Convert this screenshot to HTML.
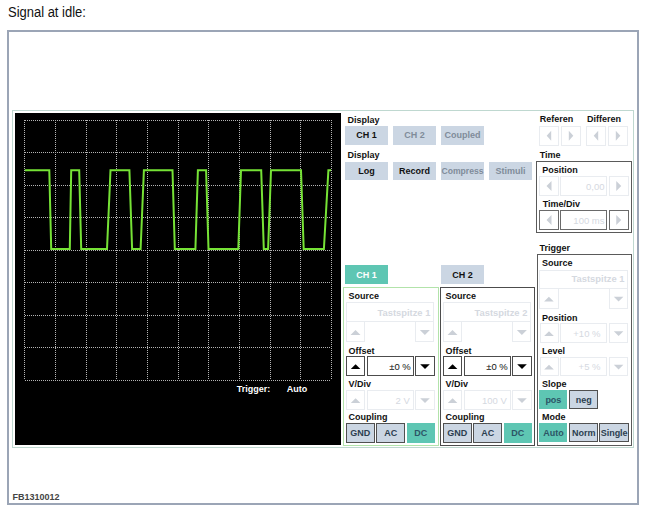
<!DOCTYPE html><html><head><meta charset="utf-8"><style>
html,body{margin:0;padding:0;background:#fff;width:648px;height:511px;overflow:hidden}
body{position:relative;font-family:"Liberation Sans",sans-serif}
.a{position:absolute;box-sizing:border-box}
.t{white-space:nowrap}
</style></head><body>
<div class="a t" style="top:2.82px;font-size:13.8px;font-weight:normal;color:#111;line-height:20px;left:7.7px;transform:scaleX(0.94);transform-origin:0 0;">Signal at idle:</div>
<div class="a" style="left:7px;top:30px;width:632px;height:475px;border:2px solid #9BA5B6;"></div>
<div class="a t" style="top:486.88px;font-size:9px;font-weight:bold;color:#444;line-height:20px;left:12.5px;">FB1310012</div>
<div class="a" style="left:12px;top:110px;width:622px;height:338px;border:1px solid #BFD8D0;"></div>
<div class="a" style="left:15px;top:113px;width:326px;height:332px;background:#000;"></div>
<svg class="a" style="left:0;top:0" width="648" height="511"><g stroke="#B4B4B4" stroke-width="1" stroke-dasharray="1 1" shape-rendering="crispEdges"><line x1="24.8" y1="120" x2="24.8" y2="380"/><line x1="55.5" y1="120" x2="55.5" y2="380"/><line x1="86.1" y1="120" x2="86.1" y2="380"/><line x1="116.8" y1="120" x2="116.8" y2="380"/><line x1="147.4" y1="120" x2="147.4" y2="380"/><line x1="178.1" y1="120" x2="178.1" y2="380"/><line x1="208.7" y1="120" x2="208.7" y2="380"/><line x1="239.4" y1="120" x2="239.4" y2="380"/><line x1="270.0" y1="120" x2="270.0" y2="380"/><line x1="300.7" y1="120" x2="300.7" y2="380"/><line x1="331.3" y1="120" x2="331.3" y2="380"/><line x1="24.8" y1="120.0" x2="331.3" y2="120.0"/><line x1="24.8" y1="152.5" x2="331.3" y2="152.5"/><line x1="24.8" y1="185.0" x2="331.3" y2="185.0"/><line x1="24.8" y1="217.5" x2="331.3" y2="217.5"/><line x1="24.8" y1="250.0" x2="331.3" y2="250.0"/><line x1="24.8" y1="282.5" x2="331.3" y2="282.5"/><line x1="24.8" y1="315.0" x2="331.3" y2="315.0"/><line x1="24.8" y1="347.5" x2="331.3" y2="347.5"/><line x1="24.8" y1="380.0" x2="331.3" y2="380.0"/></g>
<polyline fill="none" stroke="#76E236" stroke-width="2" stroke-linejoin="miter" points="24.8,170.2 49.3,170.2 51.2,249 69.8,249 71.2,170.2 79.2,170.2 81.2,249 107,249 110.5,170.2 129.4,170.2 132.1,249 140.6,249 143.9,170.2 172.5,170.2 174.8,249 195.4,249 197.9,170.2 206.1,170.2 208.5,249 238.3,249 241,170.2 261.2,170.2 263.8,249 268.1,249 271,170.2 301,170.2 303.7,249 323.9,249 328.4,170.2 331,170.2"/></svg>
<div class="a t" style="top:379.08px;font-size:9px;font-weight:bold;color:#FFF;line-height:20px;left:236.7px;">Trigger:</div>
<div class="a t" style="top:379.08px;font-size:9px;font-weight:bold;color:#FFF;line-height:20px;left:286.7px;">Auto</div>
<div class="a t" style="top:109.98px;font-size:9px;font-weight:bold;color:#111;line-height:20px;left:347.4px;">Display</div>
<div class="a" style="left:345px;top:126px;width:43px;height:18.5px;background:#CBD6E3;"></div>
<div class="a t" style="top:125.41px;font-size:9px;font-weight:bold;color:#111;line-height:20px;left:266.5px;width:200px;text-align:center;">CH 1</div>
<div class="a" style="left:393px;top:126px;width:43px;height:18.5px;background:#CBD6E3;"></div>
<div class="a t" style="top:125.41px;font-size:9px;font-weight:bold;color:#808C9A;line-height:20px;left:314.5px;width:200px;text-align:center;">CH 2</div>
<div class="a" style="left:441px;top:126px;width:43px;height:18.5px;background:#CBD6E3;"></div>
<div class="a t" style="top:125.41px;font-size:9px;font-weight:bold;color:#808C9A;line-height:20px;left:362.5px;width:200px;text-align:center;">Coupled</div>
<div class="a t" style="top:145.08px;font-size:9px;font-weight:bold;color:#111;line-height:20px;left:347.4px;">Display</div>
<div class="a" style="left:345px;top:161.5px;width:43px;height:18.69999999999999px;background:#CBD6E3;"></div>
<div class="a t" style="top:161.01px;font-size:9px;font-weight:bold;color:#111;line-height:20px;left:266.5px;width:200px;text-align:center;">Log</div>
<div class="a" style="left:393px;top:161.5px;width:43px;height:18.69999999999999px;background:#CBD6E3;"></div>
<div class="a t" style="top:161.01px;font-size:9px;font-weight:bold;color:#111;line-height:20px;left:314.5px;width:200px;text-align:center;">Record</div>
<div class="a" style="left:441px;top:161.5px;width:43px;height:18.69999999999999px;background:#CBD6E3;"></div>
<div class="a t" style="top:161.00px;font-size:8.6px;font-weight:bold;color:#808C9A;line-height:20px;left:362.5px;width:200px;text-align:center;">Compress</div>
<div class="a" style="left:489px;top:161.5px;width:43px;height:18.69999999999999px;background:#CBD6E3;"></div>
<div class="a t" style="top:161.01px;font-size:9px;font-weight:bold;color:#808C9A;line-height:20px;left:410.5px;width:200px;text-align:center;">Stimuli</div>
<div class="a t" style="top:109.28px;font-size:9px;font-weight:bold;color:#111;line-height:20px;left:539.7px;">Referen</div>
<div class="a t" style="top:109.28px;font-size:9px;font-weight:bold;color:#111;line-height:20px;left:586.9px;">Differen</div>
<div class="a" style="left:539px;top:126px;width:20px;height:19.5px;border:1px solid #E9ECF0;"></div>
<div class="a" style="left:561px;top:126px;width:20px;height:19.5px;border:1px solid #E9ECF0;"></div>
<div class="a" style="left:586px;top:126px;width:20px;height:19.5px;border:1px solid #E9ECF0;"></div>
<div class="a" style="left:608px;top:126px;width:20px;height:19.5px;border:1px solid #E9ECF0;"></div>
<div class="a t" style="top:145.28px;font-size:9px;font-weight:bold;color:#111;line-height:20px;left:539.7px;">Time</div>
<div class="a" style="left:536px;top:161px;width:96px;height:71.5px;border:1px solid #5A5A5A;"></div>
<div class="a t" style="top:160.28px;font-size:9px;font-weight:bold;color:#111;line-height:20px;left:542.2px;">Position</div>
<div class="a" style="left:539px;top:176px;width:20px;height:20px;border:1px solid #E9ECF0;"></div>
<div class="a" style="left:560px;top:176px;width:46.5px;height:20px;border:1px solid #E9ECF0;"></div>
<div class="a" style="left:609px;top:176px;width:19.5px;height:20px;border:1px solid #E9ECF0;"></div>
<div class="a t" style="top:176.67px;font-size:9.5px;font-weight:normal;color:#D5D9DF;line-height:20px;right:43.5px;text-align:right;">0,00</div>
<div class="a t" style="top:193.58px;font-size:9px;font-weight:bold;color:#111;line-height:20px;left:542.7px;">Time/Div</div>
<div class="a" style="left:539px;top:210px;width:20px;height:20px;border:1px solid #6A6A6A;"></div>
<div class="a" style="left:560px;top:210px;width:46.5px;height:20px;border:1px solid #6A6A6A;"></div>
<div class="a" style="left:609px;top:210px;width:19.5px;height:20px;border:1px solid #6A6A6A;"></div>
<div class="a t" style="top:210.67px;font-size:9.5px;font-weight:normal;color:#D5D9DF;line-height:20px;right:43.5px;text-align:right;">100 ms</div>
<div class="a t" style="top:237.88px;font-size:9px;font-weight:bold;color:#111;line-height:20px;left:539.4px;">Trigger</div>
<div class="a" style="left:536.5px;top:254px;width:95.5px;height:191.8px;border:1px solid #5A5A5A;"></div>
<div class="a t" style="top:252.88px;font-size:9px;font-weight:bold;color:#111;line-height:20px;left:542px;">Source</div>
<div class="a" style="left:539px;top:270px;width:89px;height:18.5px;border:1px solid #E9ECF0;"></div>
<div class="a t" style="top:269.24px;font-size:9.4px;font-weight:bold;color:#D5D9DF;line-height:20px;right:23.5px;text-align:right;">Tastspitze 1</div>
<div class="a" style="left:539px;top:288px;width:20px;height:21px;border:1px solid #E9ECF0;"></div>
<div class="a" style="left:609.3px;top:288px;width:18.700000000000045px;height:21px;border:1px solid #E9ECF0;"></div>
<div class="a t" style="top:307.58px;font-size:9px;font-weight:bold;color:#111;line-height:20px;left:542px;">Position</div>
<div class="a" style="left:539.5px;top:323px;width:19.0px;height:20px;border:1px solid #E9ECF0;"></div>
<div class="a" style="left:560.3px;top:323px;width:46.30000000000007px;height:20px;border:1px solid #E9ECF0;"></div>
<div class="a" style="left:609px;top:323px;width:19.200000000000045px;height:20px;border:1px solid #E9ECF0;"></div>
<div class="a t" style="top:323.67px;font-size:9.5px;font-weight:normal;color:#D5D9DF;line-height:20px;right:47.5px;text-align:right;">+10 %</div>
<div class="a t" style="top:340.88px;font-size:9px;font-weight:bold;color:#111;line-height:20px;left:542px;">Level</div>
<div class="a" style="left:539.5px;top:356.7px;width:19.0px;height:19.600000000000023px;border:1px solid #E9ECF0;"></div>
<div class="a" style="left:560.3px;top:356.7px;width:46.30000000000007px;height:19.600000000000023px;border:1px solid #E9ECF0;"></div>
<div class="a" style="left:609px;top:356.7px;width:19.200000000000045px;height:19.600000000000023px;border:1px solid #E9ECF0;"></div>
<div class="a t" style="top:357.17px;font-size:9.5px;font-weight:normal;color:#D5D9DF;line-height:20px;right:47.5px;text-align:right;">+5 %</div>
<div class="a t" style="top:373.78px;font-size:9px;font-weight:bold;color:#111;line-height:20px;left:542px;">Slope</div>
<div class="a" style="left:539.3px;top:390px;width:28.200000000000045px;height:19px;background:#5EC6B3;"></div>
<div class="a t" style="top:389.66px;font-size:9px;font-weight:bold;color:#2C5566;line-height:20px;left:453.4px;width:200px;text-align:center;">pos</div>
<div class="a" style="left:569.4px;top:390px;width:28.600000000000023px;height:19px;border:1px solid #505050;background:#CBD6E3;"></div>
<div class="a t" style="top:389.66px;font-size:9px;font-weight:bold;color:#2C3E50;line-height:20px;left:483.70000000000005px;width:200px;text-align:center;">neg</div>
<div class="a t" style="top:407.08px;font-size:9px;font-weight:bold;color:#111;line-height:20px;left:542px;">Mode</div>
<div class="a" style="left:539.3px;top:423.3px;width:28.200000000000045px;height:18.899999999999977px;background:#5EC6B3;"></div>
<div class="a t" style="top:422.91px;font-size:9px;font-weight:bold;color:#2C5566;line-height:20px;left:453.4px;width:200px;text-align:center;">Auto</div>
<div class="a" style="left:569.4px;top:423.3px;width:28.600000000000023px;height:18.899999999999977px;border:1px solid #505050;background:#CBD6E3;"></div>
<div class="a t" style="top:422.91px;font-size:9px;font-weight:bold;color:#2C3E50;line-height:20px;left:483.70000000000005px;width:200px;text-align:center;">Norm</div>
<div class="a" style="left:599.3px;top:423.3px;width:29.700000000000045px;height:18.899999999999977px;border:1px solid #505050;background:#CBD6E3;"></div>
<div class="a t" style="top:422.91px;font-size:9px;font-weight:bold;color:#2C3E50;line-height:20px;left:514.15px;width:200px;text-align:center;">Single</div>
<div class="a" style="left:345px;top:265px;width:43px;height:19px;background:#5EC6B3;"></div>
<div class="a t" style="top:264.66px;font-size:9px;font-weight:bold;color:#FFFFFF;line-height:20px;left:266.5px;width:200px;text-align:center;">CH 1</div>
<div class="a" style="left:441px;top:265px;width:43px;height:19px;background:#CBD6E3;"></div>
<div class="a t" style="top:264.66px;font-size:9px;font-weight:bold;color:#111;line-height:20px;left:362.5px;width:200px;text-align:center;">CH 2</div>
<div class="a" style="left:343px;top:287px;width:96px;height:159px;border:1px solid #B2E3AA;"></div>
<div class="a t" style="top:285.88px;font-size:9px;font-weight:bold;color:#111;line-height:20px;left:348.5px;">Source</div>
<div class="a" style="left:345.8px;top:302px;width:88.69999999999999px;height:19.80000000000001px;border:1px solid #E9ECF0;"></div>
<div class="a t" style="top:302.74px;font-size:9.4px;font-weight:bold;color:#D5D9DF;line-height:20px;right:217.60000000000002px;text-align:right;">Tastspitze 1</div>
<div class="a" style="left:345.8px;top:321.4px;width:19.5px;height:20.900000000000034px;border:1px solid #E9ECF0;"></div>
<div class="a" style="left:415.3px;top:321.4px;width:19.19999999999999px;height:20.900000000000034px;border:1px solid #E9ECF0;"></div>
<div class="a t" style="top:340.68px;font-size:9px;font-weight:bold;color:#111;line-height:20px;left:348.5px;">Offset</div>
<div class="a" style="left:345.8px;top:356px;width:19.600000000000023px;height:20px;border:1px solid #4C4C4C;"></div>
<div class="a" style="left:367.0px;top:356px;width:46.700000000000045px;height:20px;border:1px solid #4C4C4C;"></div>
<div class="a" style="left:415.4px;top:356px;width:19.200000000000045px;height:20px;border:1px solid #4C4C4C;"></div>
<div class="a t" style="top:356.67px;font-size:9.5px;font-weight:normal;color:#111;line-height:20px;right:237.2px;text-align:right;">&plusmn;0 %</div>
<div class="a t" style="top:373.58px;font-size:9px;font-weight:bold;color:#111;line-height:20px;left:348.5px;">V/Div</div>
<div class="a" style="left:345.8px;top:390.2px;width:19.600000000000023px;height:19.600000000000023px;border:1px solid #E9ECF0;"></div>
<div class="a" style="left:367.0px;top:390.2px;width:46.700000000000045px;height:19.600000000000023px;border:1px solid #E9ECF0;"></div>
<div class="a" style="left:415.4px;top:390.2px;width:19.200000000000045px;height:19.600000000000023px;border:1px solid #E9ECF0;"></div>
<div class="a t" style="top:390.67px;font-size:9.5px;font-weight:normal;color:#D5D9DF;line-height:20px;right:238.2px;text-align:right;">2 V</div>
<div class="a t" style="top:406.88px;font-size:9px;font-weight:bold;color:#111;line-height:20px;left:348.5px;">Coupling</div>
<div class="a" style="left:345.8px;top:423px;width:29.0px;height:19.5px;border:1px solid #505050;background:#CBD6E3;"></div>
<div class="a t" style="top:422.91px;font-size:9px;font-weight:bold;color:#2C3E50;line-height:20px;left:260.3px;width:200px;text-align:center;">GND</div>
<div class="a" style="left:376.3px;top:423px;width:28.69999999999999px;height:19.5px;border:1px solid #505050;background:#CBD6E3;"></div>
<div class="a t" style="top:422.91px;font-size:9px;font-weight:bold;color:#2C3E50;line-height:20px;left:290.65px;width:200px;text-align:center;">AC</div>
<div class="a" style="left:406.6px;top:423px;width:28.19999999999999px;height:19.5px;background:#5EC6B3;"></div>
<div class="a t" style="top:422.91px;font-size:9px;font-weight:bold;color:#2C5566;line-height:20px;left:320.70000000000005px;width:200px;text-align:center;">DC</div>
<div class="a" style="left:440px;top:287px;width:95px;height:159px;border:1px solid #4C4C4C;"></div>
<div class="a t" style="top:285.88px;font-size:9px;font-weight:bold;color:#111;line-height:20px;left:445.5px;">Source</div>
<div class="a" style="left:442.8px;top:302px;width:88.69999999999999px;height:19.80000000000001px;border:1px solid #E9ECF0;"></div>
<div class="a t" style="top:302.74px;font-size:9.4px;font-weight:bold;color:#D5D9DF;line-height:20px;right:120.60000000000002px;text-align:right;">Tastspitze 2</div>
<div class="a" style="left:442.8px;top:321.4px;width:19.5px;height:20.900000000000034px;border:1px solid #E9ECF0;"></div>
<div class="a" style="left:512.3px;top:321.4px;width:19.200000000000045px;height:20.900000000000034px;border:1px solid #E9ECF0;"></div>
<div class="a t" style="top:340.68px;font-size:9px;font-weight:bold;color:#111;line-height:20px;left:445.5px;">Offset</div>
<div class="a" style="left:442.8px;top:356px;width:19.600000000000023px;height:20px;border:1px solid #4C4C4C;"></div>
<div class="a" style="left:464.0px;top:356px;width:46.700000000000045px;height:20px;border:1px solid #4C4C4C;"></div>
<div class="a" style="left:512.4px;top:356px;width:19.200000000000045px;height:20px;border:1px solid #4C4C4C;"></div>
<div class="a t" style="top:356.67px;font-size:9.5px;font-weight:normal;color:#111;line-height:20px;right:140.2px;text-align:right;">&plusmn;0 %</div>
<div class="a t" style="top:373.58px;font-size:9px;font-weight:bold;color:#111;line-height:20px;left:445.5px;">V/Div</div>
<div class="a" style="left:442.8px;top:390.2px;width:19.600000000000023px;height:19.600000000000023px;border:1px solid #E9ECF0;"></div>
<div class="a" style="left:464.0px;top:390.2px;width:46.700000000000045px;height:19.600000000000023px;border:1px solid #E9ECF0;"></div>
<div class="a" style="left:512.4px;top:390.2px;width:19.200000000000045px;height:19.600000000000023px;border:1px solid #E9ECF0;"></div>
<div class="a t" style="top:390.67px;font-size:9.5px;font-weight:normal;color:#D5D9DF;line-height:20px;right:141.2px;text-align:right;">100 V</div>
<div class="a t" style="top:406.88px;font-size:9px;font-weight:bold;color:#111;line-height:20px;left:445.5px;">Coupling</div>
<div class="a" style="left:442.8px;top:423px;width:29.0px;height:19.5px;border:1px solid #505050;background:#CBD6E3;"></div>
<div class="a t" style="top:422.91px;font-size:9px;font-weight:bold;color:#2C3E50;line-height:20px;left:357.3px;width:200px;text-align:center;">GND</div>
<div class="a" style="left:473.3px;top:423px;width:28.69999999999999px;height:19.5px;border:1px solid #505050;background:#CBD6E3;"></div>
<div class="a t" style="top:422.91px;font-size:9px;font-weight:bold;color:#2C3E50;line-height:20px;left:387.65px;width:200px;text-align:center;">AC</div>
<div class="a" style="left:503.6px;top:423px;width:28.199999999999932px;height:19.5px;background:#5EC6B3;"></div>
<div class="a t" style="top:422.91px;font-size:9px;font-weight:bold;color:#2C5566;line-height:20px;left:417.70000000000005px;width:200px;text-align:center;">DC</div>
<svg class="a" style="left:0;top:0" width="648" height="511"><polygon points="551.2,130.7 551.2,140.7 546.7,135.7" fill="#CBD0D7"/><polygon points="568.8,130.7 568.8,140.7 573.3,135.7" fill="#CBD0D7"/><polygon points="598.2,130.7 598.2,140.7 593.7,135.7" fill="#CBD0D7"/><polygon points="615.8,130.7 615.8,140.7 620.3,135.7" fill="#CBD0D7"/><polygon points="551.5,181.0 551.5,191.0 546.5,186.0" fill="#CBD0D7"/><polygon points="616.25,181.0 616.25,191.0 621.25,186.0" fill="#CBD0D7"/><polygon points="551.5,215.0 551.5,225.0 546.5,220.0" fill="#CBD0D7"/><polygon points="616.25,215.0 616.25,225.0 621.25,220.0" fill="#CBD0D7"/><polygon points="544.1,301.59999999999997 553.6999999999999,301.59999999999997 548.9,296.8" fill="#CBD0D7"/><polygon points="613.8000000000001,296.8 623.4,296.8 618.6,301.59999999999997" fill="#CBD0D7"/><polygon points="544.2,336.0 553.8,336.0 549.0,331.20000000000005" fill="#CBD0D7"/><polygon points="613.8000000000001,331.20000000000005 623.4,331.20000000000005 618.6,336.0" fill="#CBD0D7"/><polygon points="544.2,369.5 553.8,369.5 549.0,364.70000000000005" fill="#CBD0D7"/><polygon points="613.8000000000001,364.70000000000005 623.4,364.70000000000005 618.6,369.5" fill="#CBD0D7"/><polygon points="350.5,335.0 360.5,335.0 355.5,330.0" fill="#CBD0D7"/><polygon points="419.9,330.0 429.9,330.0 424.9,335.0" fill="#CBD0D7"/><polygon points="350.8,369.0 360.40000000000003,369.0 355.6,364.20000000000005" fill="#000"/><polygon points="420.2,364.20000000000005 429.8,364.20000000000005 425.0,369.0" fill="#000"/><polygon points="350.8,403.0 360.40000000000003,403.0 355.6,398.20000000000005" fill="#CBD0D7"/><polygon points="420.2,398.20000000000005 429.8,398.20000000000005 425.0,403.0" fill="#CBD0D7"/><polygon points="447.5,335.0 457.5,335.0 452.5,330.0" fill="#CBD0D7"/><polygon points="516.9,330.0 526.9,330.0 521.9,335.0" fill="#CBD0D7"/><polygon points="447.8,369.0 457.40000000000003,369.0 452.6,364.20000000000005" fill="#000"/><polygon points="517.2,364.20000000000005 526.8,364.20000000000005 522.0,369.0" fill="#000"/><polygon points="447.8,403.0 457.40000000000003,403.0 452.6,398.20000000000005" fill="#CBD0D7"/><polygon points="517.2,398.20000000000005 526.8,398.20000000000005 522.0,403.0" fill="#CBD0D7"/></svg>
</body></html>
